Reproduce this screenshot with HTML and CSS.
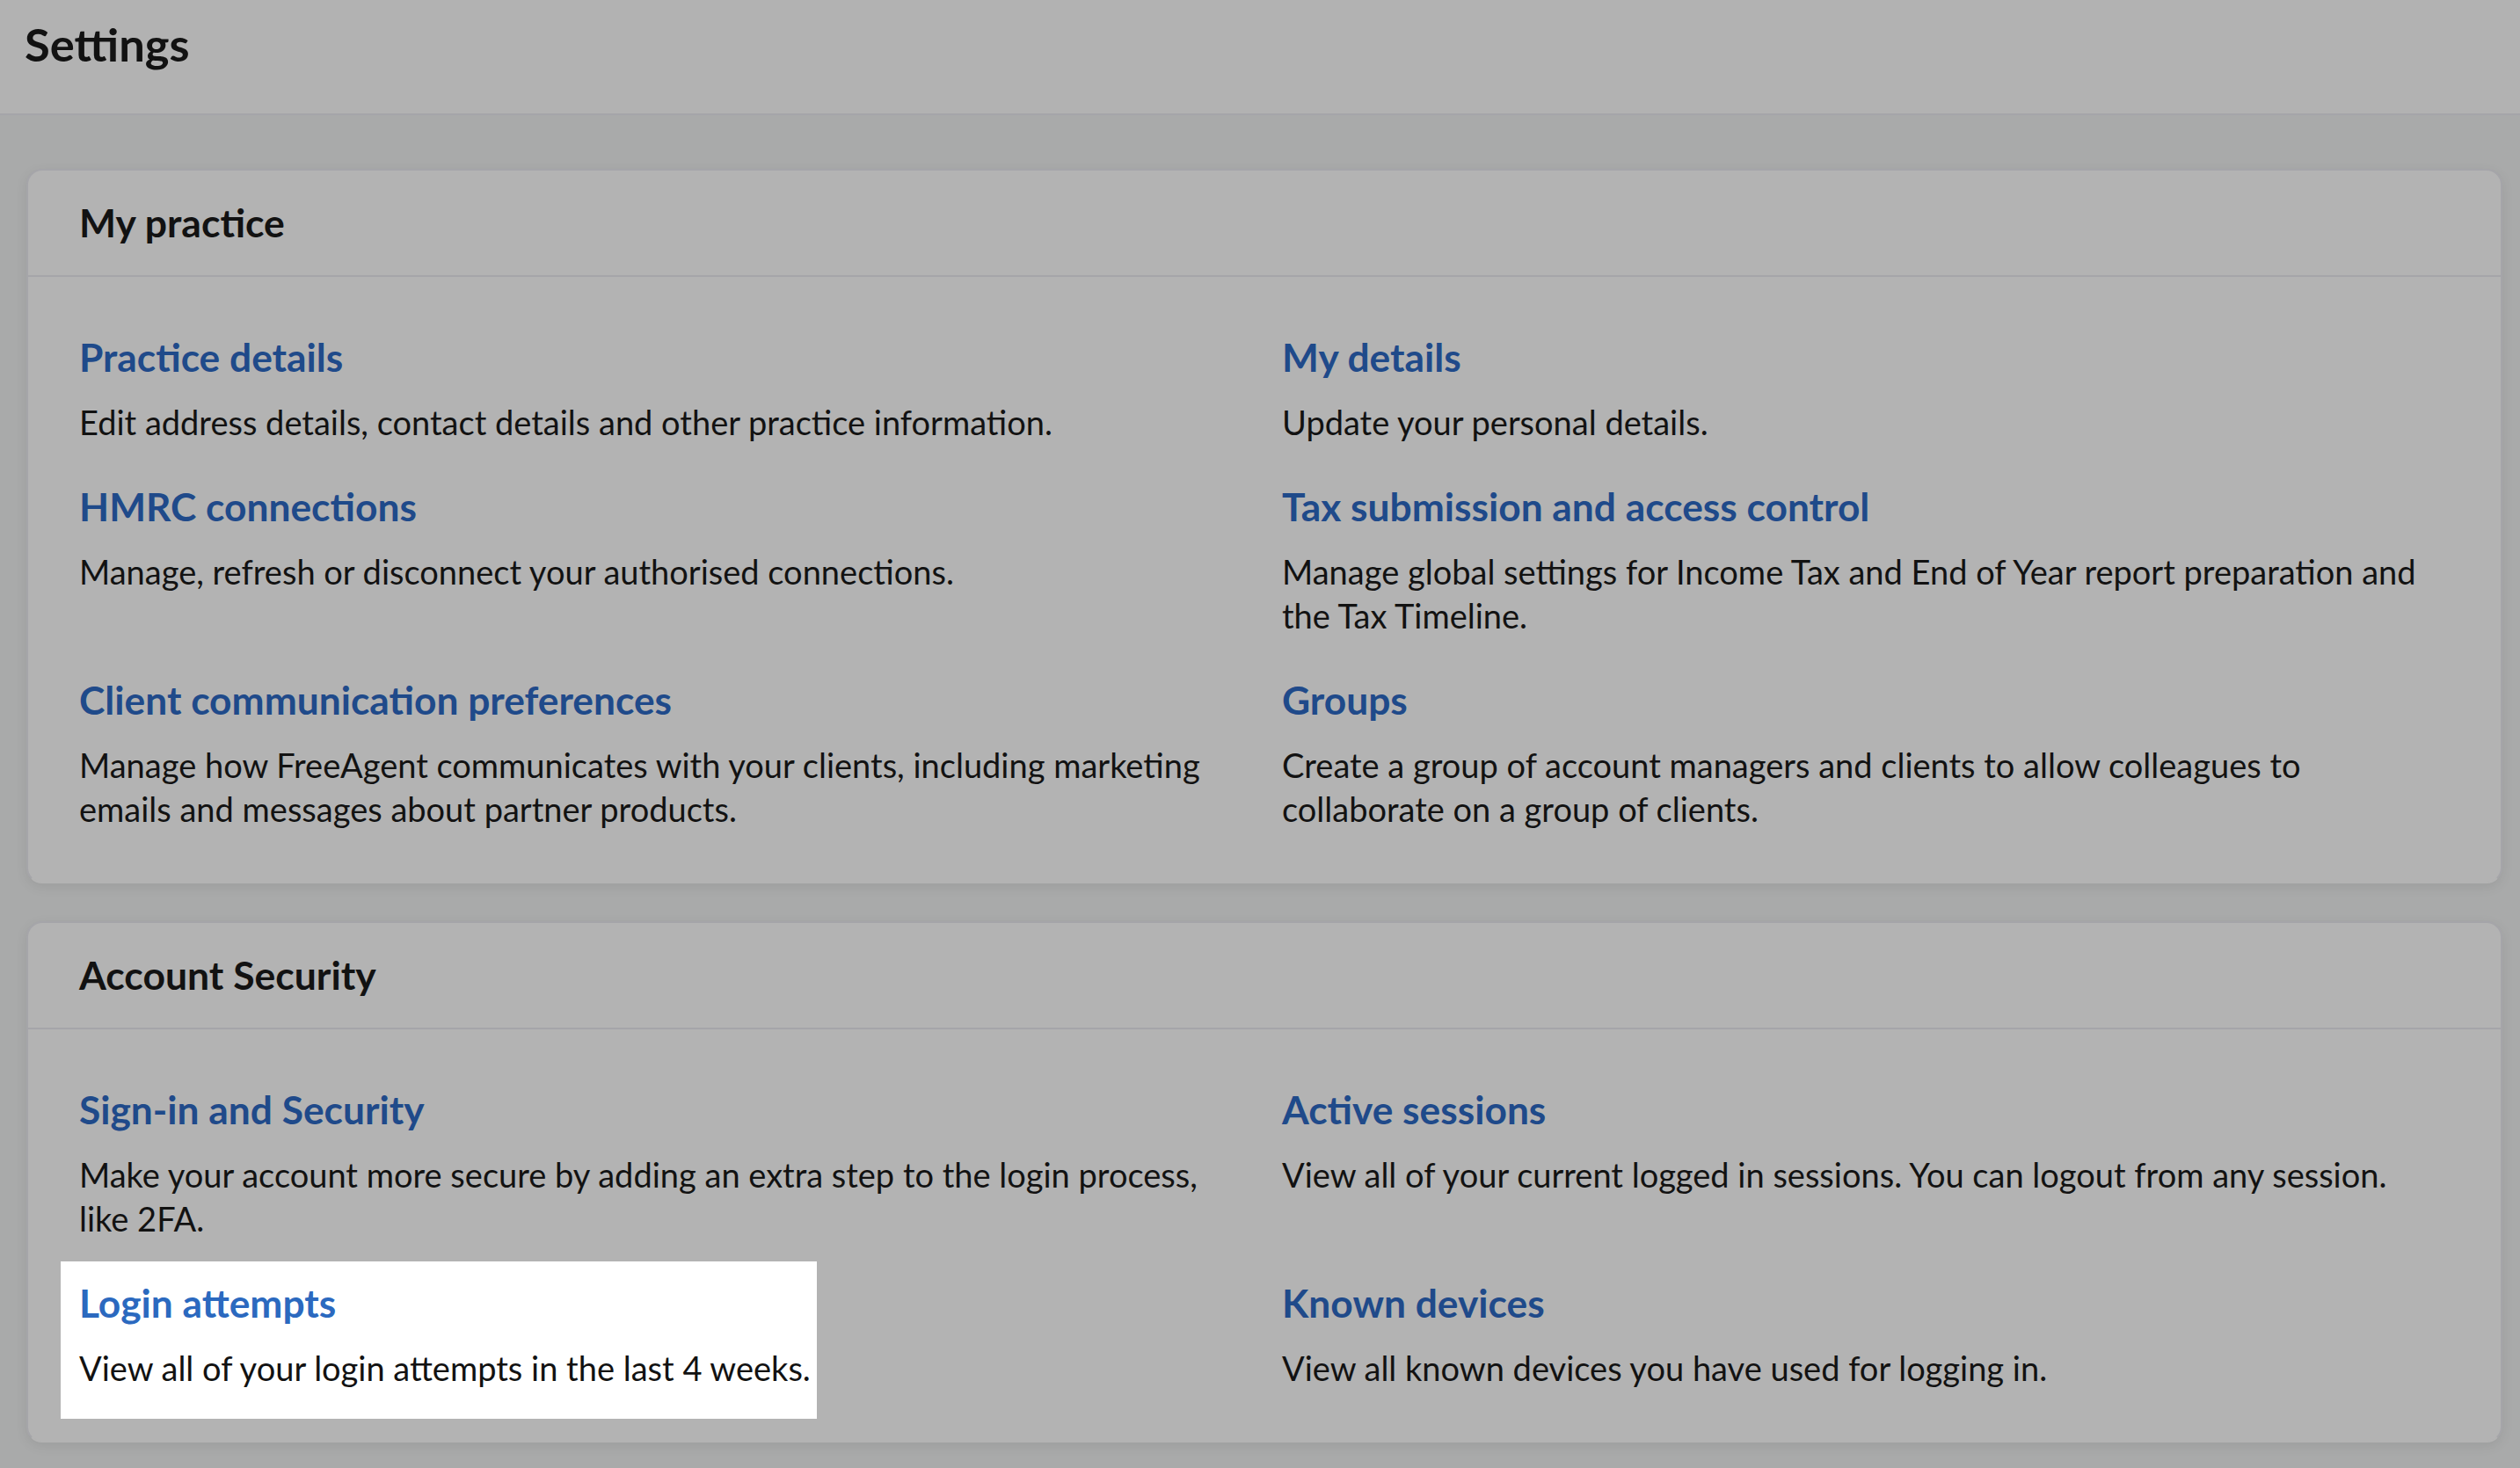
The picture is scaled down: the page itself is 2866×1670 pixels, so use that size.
FILE: index.html
```html
<!DOCTYPE html>
<html>
<head>
  <meta charset="utf-8">
  <title>Settings</title>
  <link rel="stylesheet" href="styles.css">
</head>
<body>
  <div class="page-header">
    <h1>Settings</h1>
  </div>

  <div class="page-main">
    <section class="card">
      <h2 class="card-title">My practice</h2>
      <div class="card-grid">
        <div class="item">
          <a class="item-link">Practice details</a>
          <p>Edit address details, contact details and other practice information.</p>
        </div>
        <div class="item">
          <a class="item-link">My details</a>
          <p>Update your personal details.</p>
        </div>
        <div class="item">
          <a class="item-link">HMRC connections</a>
          <p>Manage, refresh or disconnect your authorised connections.</p>
        </div>
        <div class="item">
          <a class="item-link">Tax submission and access control</a>
          <p>Manage global settings for Income Tax and End of Year report preparation and the Tax Timeline.</p>
        </div>
        <div class="item">
          <a class="item-link">Client communication preferences</a>
          <p>Manage how FreeAgent communicates with your clients, including marketing emails and messages about partner products.</p>
        </div>
        <div class="item">
          <a class="item-link">Groups</a>
          <p>Create a group of account managers and clients to allow colleagues to collaborate on a group of clients.</p>
        </div>
      </div>
    </section>

    <section class="card">
      <h2 class="card-title">Account Security</h2>
      <div class="card-grid">
        <div class="item">
          <a class="item-link">Sign-in and Security</a>
          <p>Make your account more secure by adding an extra step to the login process, like 2FA.</p>
        </div>
        <div class="item">
          <a class="item-link">Active sessions</a>
          <p>View all of your current logged in sessions. You can logout from any session.</p>
        </div>
        <div class="item item-spot">
          <a class="item-link">Login attempts</a>
          <p>View all of your login attempts in the last 4 weeks.</p>
        </div>
        <div class="item">
          <a class="item-link">Known devices</a>
          <p>View all known devices you have used for logging in.</p>
        </div>
      </div>
    </section>
  </div>
</body>
</html>
```

FILE: styles.css
```css
* {
  box-sizing: border-box;
}

html, body {
  height: 100%;
}

body {
  margin: 0;
  background: #a9aaaa;
  color: #121212;
  font-family: "Lato", "Liberation Sans", sans-serif;
  font-size: 38px;
  overflow: hidden;
}

.page-header {
  height: 131px;
  padding: 25px 30px 0 28px;
  background: #b2b2b2;
  border-bottom: 2px solid #a5a5a9;
}

.page-header h1 {
  margin: 0;
  font-size: 52.5px;
  font-weight: 700;
  line-height: 50px;
}

.page-main {
  padding: 61px 20px 0 30px;
  display: flex;
  flex-direction: column;
  gap: 43px;
}

.card {
  background: #b3b3b3;
  border: 2px solid #a5a5a9;
  border-bottom-color: #b3b3b3;
  border-radius: 18px;
  box-shadow: 0 4px 14px rgba(0, 0, 0, 0.08);
}

.card-title {
  margin: 0;
  height: 121px;
  padding: 34px 0 0 58px;
  border-bottom: 2px solid #a5a5a9;
  font-size: 44.5px;
  font-weight: 700;
  line-height: 50px;
}

.card-grid {
  display: grid;
  grid-template-columns: 1278px 1fr;
  column-gap: 90px;
  row-gap: 46px;
  padding: 66px 60px 58px 58px;
}

.item p {
  margin: 24px 0 0;
  line-height: 50px;
}

.item-link {
  display: block;
  color: #1f4a8a;
  font-size: 44.3px;
  font-weight: 700;
  line-height: 50px;
}

.item-spot {
  width: 860px;
  margin: -22px 0 -33px -21px;
  padding: 22px 0 33px 21px;
  background: #fff;
}

.item-spot .item-link {
  color: #2b69bf;
}
```
